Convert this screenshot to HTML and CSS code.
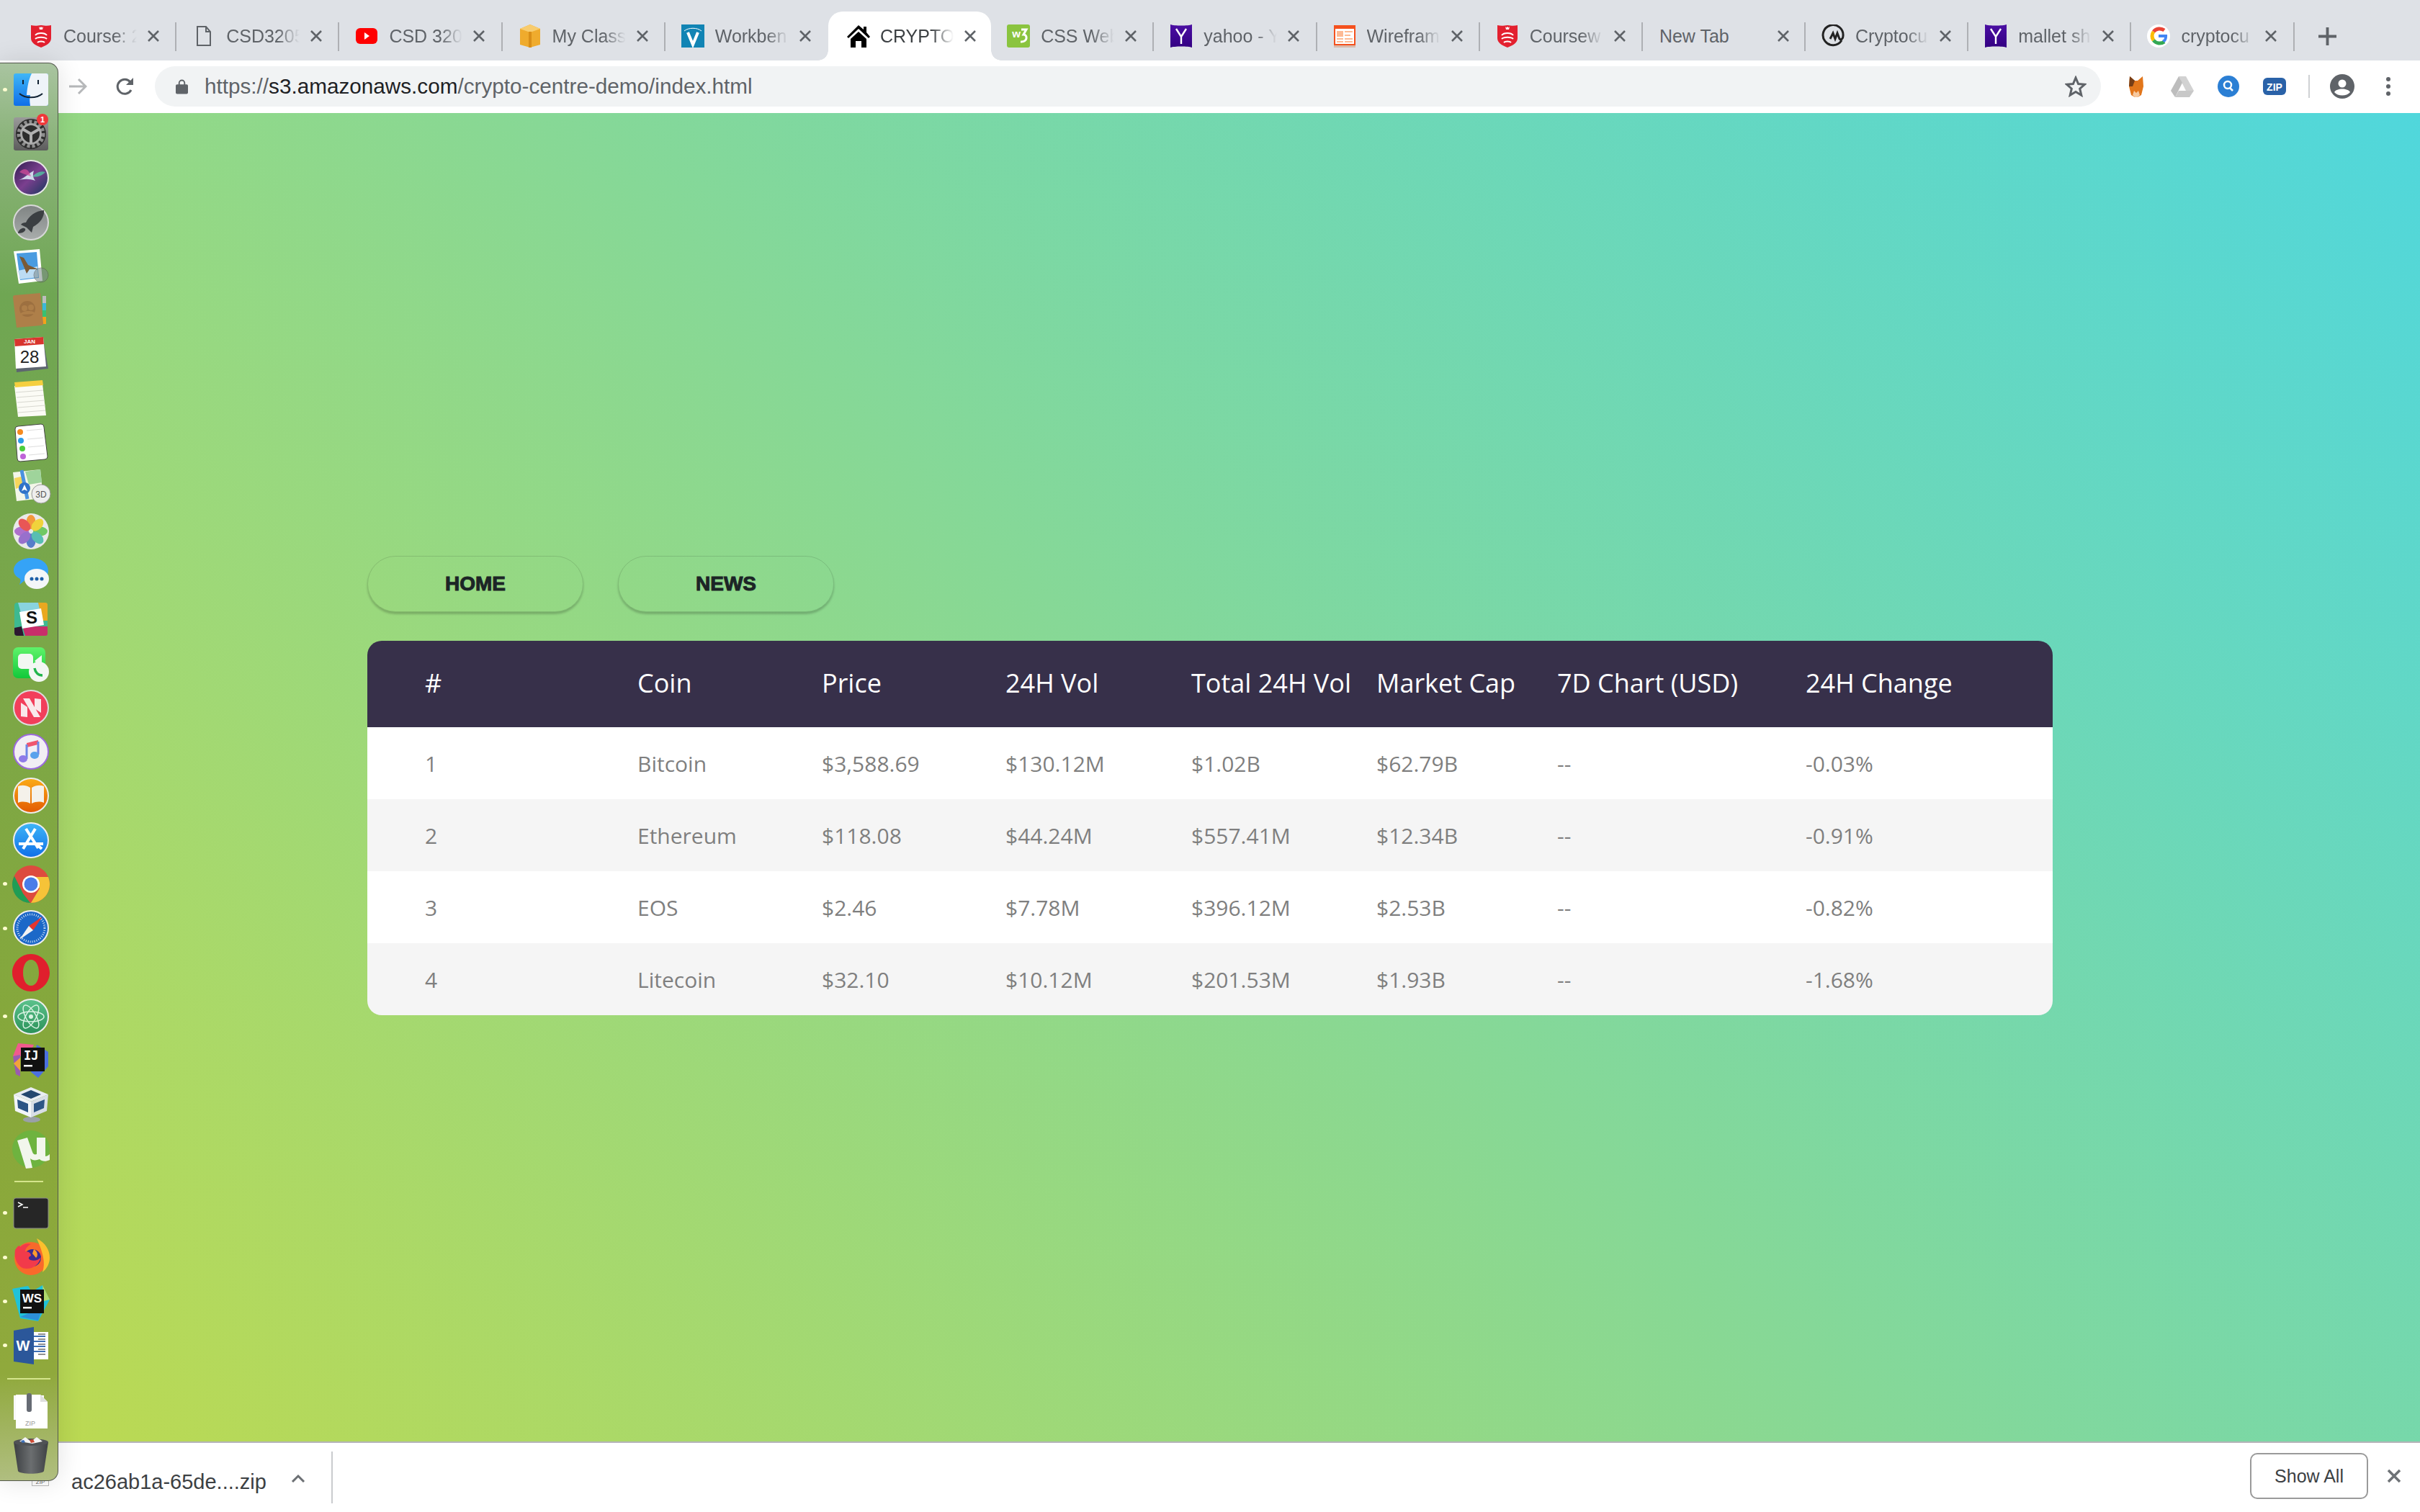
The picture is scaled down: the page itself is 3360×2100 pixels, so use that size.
FILE: index.html
```html
<!DOCTYPE html>
<html lang="en">
<head>
    <meta charset="UTF-8">
    <meta name="viewport" content="width=device-width, initial-scale=1.0">
    <title>CRYPTO CENTRE</title>
    <link rel="stylesheet" href="styles.css">
</head>
<body>

<svg class="svg-defs" aria-hidden="true">
    <defs>
        <linearGradient id="gBlue" x1="0" y1="0" x2="0" y2="1"><stop offset="0" stop-color="#3fb6f7"/><stop offset="1" stop-color="#0f6fe8"/></linearGradient>
        <linearGradient id="gGrey" x1="0" y1="0" x2="0" y2="1"><stop offset="0" stop-color="#9a9a9a"/><stop offset="1" stop-color="#5c5c5c"/></linearGradient>
        <linearGradient id="gRocket" x1="0" y1="0" x2="0" y2="1"><stop offset="0" stop-color="#7f8483"/><stop offset="1" stop-color="#a9adac"/></linearGradient>
        <linearGradient id="gSiri" x1="0" y1="0" x2="1" y2="1"><stop offset="0" stop-color="#2b1c4d"/><stop offset=".5" stop-color="#7b3f8f"/><stop offset="1" stop-color="#13375a"/></linearGradient>
        <linearGradient id="gOrange" x1="0" y1="0" x2="0" y2="1"><stop offset="0" stop-color="#fbab16"/><stop offset="1" stop-color="#e25a03"/></linearGradient>
        <linearGradient id="gGreen" x1="0" y1="0" x2="0" y2="1"><stop offset="0" stop-color="#5ff36a"/><stop offset="1" stop-color="#12c93a"/></linearGradient>
        <linearGradient id="gAtom" x1="0" y1="0" x2="0" y2="1"><stop offset="0" stop-color="#5cc28c"/><stop offset="1" stop-color="#2b9159"/></linearGradient>
        <linearGradient id="gYahoo" x1="0" y1="0" x2="0" y2="1"><stop offset="0" stop-color="#4b0fa3"/><stop offset="1" stop-color="#330082"/></linearGradient>
        <linearGradient id="gTrash" x1="0" y1="0" x2="1" y2="0"><stop offset="0" stop-color="#3c3f42"/><stop offset=".5" stop-color="#6b6e70"/><stop offset="1" stop-color="#3e4144"/></linearGradient>
        <symbol id="crest" viewBox="0 0 32 32">
            <path fill="#e3202f" d="M2 1c4 1 8 1 14 0 6 1 10 1 14 0v18c0 6-6 10-14 13C8 29 2 25 2 19z"/>
            <path fill="#fff" d="M13 3l1.500 1.500L16 3l1.500 1.500L19 3l-1 4h-4z"/>
            <path fill="none" stroke="#fff" stroke-width="2" d="M8 15c3-4 13-4 16 0M8 20c3-3 13-3 16 0M11 25c2-2 8-2 10 0"/>
        </symbol>
        <symbol id="yahoo" viewBox="0 0 32 32">
            <path fill="url(#gYahoo)" d="M1 0c5 2 25 2 30 0v32c-5-2-25-2-30 0z"/>
            <path fill="none" stroke="#fff" stroke-width="2.400" d="M9 6l7 11 7-11M16 17v10"/>
        </symbol>
        <symbol id="closeX" viewBox="0 0 18 18">
            <path stroke="#5f6368" stroke-width="2.600" d="M2 2l14 14M16 2L2 16"/>
        </symbol>
    </defs>
</svg>

<header class="tab-strip">
    <div class="tab">
        <svg class="favicon" viewBox="0 0 32 32"><use href="#crest"/></svg>
        <span class="tab-title">Course: 2</span><svg class="tab-close"><use href="#closeX"/></svg>
    </div>
    <div class="tab">
        <svg class="favicon" viewBox="0 0 32 32"><path fill="none" stroke="#5f6368" stroke-width="2" d="M7 3h12l6 7v19H7zM19 3v7h6"/></svg>
        <span class="tab-title">CSD3205</span><svg class="tab-close"><use href="#closeX"/></svg>
    </div>
    <div class="tab">
        <svg class="favicon" viewBox="0 0 32 32"><rect x="1" y="5" width="30" height="22" rx="6" fill="#f00"/><path fill="#fff" d="M13 11l7 5-7 5z"/></svg>
        <span class="tab-title">CSD 320</span><svg class="tab-close"><use href="#closeX"/></svg>
    </div>
    <div class="tab">
        <svg class="favicon" viewBox="0 0 32 32"><path fill="#efab2d" d="M2 6l14-6 14 6v22l-14 4-14-4z"/><path fill="#f8cc6e" d="M2 6l14-6 14 6-14 5z"/><path fill="#d98e17" d="M14 10h4v22h-4z"/></svg>
        <span class="tab-title">My Class</span><svg class="tab-close"><use href="#closeX"/></svg>
    </div>
    <div class="tab tab-before-active">
        <svg class="favicon" viewBox="0 0 32 32"><rect width="32" height="32" fill="#1184b4"/><path fill="none" stroke="#fff" stroke-width="4" d="M9 11l7 17 7-17"/><path fill="none" stroke="#fff" d="M4 9c6-5 18-5 24 0"/></svg>
        <span class="tab-title">Workben</span><svg class="tab-close"><use href="#closeX"/></svg>
    </div>
    <div class="tab tab-active">
        <svg class="favicon" viewBox="0 0 32 32"><path d="M16 1l7 6V3h4v8l5 6-2 2L16 6 2 19l-2-2zM5 20L16 10l11 10v12h-7V23h-8v9H5z"/></svg>
        <span class="tab-title">CRYPTO</span><svg class="tab-close"><use href="#closeX"/></svg>
    </div>
    <div class="tab">
        <svg class="favicon" viewBox="0 0 32 32"><rect width="32" height="32" rx="3" fill="#8ac43f"/><text x="13" y="18" class="fav-w3">w</text><path fill="none" stroke="#fff" stroke-width="3" d="M20 7h7l-4 7c6 0 6 11-4 10"/></svg>
        <span class="tab-title">CSS Web</span><svg class="tab-close"><use href="#closeX"/></svg>
    </div>
    <div class="tab">
        <svg class="favicon" viewBox="0 0 32 32"><use href="#yahoo"/></svg>
        <span class="tab-title">yahoo - Y</span><svg class="tab-close"><use href="#closeX"/></svg>
    </div>
    <div class="tab">
        <svg class="favicon" viewBox="0 0 32 32"><rect x="1" y="1" width="30" height="28" fill="#f4511e"/><rect x="3" y="6" width="26" height="21" fill="#fff"/><path fill="#fdba94" d="M5 9h9v8H5zM16 9h11v2H16zM16 14h8v2H16zM5 19h9v2H5zM16 19h11v2H16zM5 23h9v2H5zM16 23h11v2H16z"/><rect x="1" y="29" width="30" height="3" fill="#d9b9ab"/></svg>
        <span class="tab-title">Wirefram</span><svg class="tab-close"><use href="#closeX"/></svg>
    </div>
    <div class="tab">
        <svg class="favicon" viewBox="0 0 32 32"><use href="#crest"/></svg>
        <span class="tab-title">Coursew</span><svg class="tab-close"><use href="#closeX"/></svg>
    </div>
    <div class="tab">
        <span class="tab-title tab-title-wide">New Tab</span><svg class="tab-close"><use href="#closeX"/></svg>
    </div>
    <div class="tab">
        <svg class="favicon" viewBox="0 0 32 32"><path fill="none" stroke="#222" stroke-width="3" d="M28 22A14 14 0 1 1 30 16c0 4-3 6-5 4l-3-8-3 8-3-8-4 8"/></svg>
        <span class="tab-title">Cryptocu</span><svg class="tab-close"><use href="#closeX"/></svg>
    </div>
    <div class="tab">
        <svg class="favicon" viewBox="0 0 32 32"><use href="#yahoo"/></svg>
        <span class="tab-title">mallet sh</span><svg class="tab-close"><use href="#closeX"/></svg>
    </div>
    <div class="tab">
        <svg class="favicon" viewBox="0 0 32 32"><circle cx="16" cy="16" r="16" fill="#fff"/><path fill="none" stroke="#ea4335" stroke-width="5" d="M24 8a11 11 0 0 0-15 2"/><path fill="none" stroke="#fbbc05" stroke-width="5" d="M9 10a11 11 0 0 0 0 12"/><path fill="none" stroke="#34a853" stroke-width="5" d="M9 22a11 11 0 0 0 15 2"/><path fill="#4285f4" d="M16 14h12c.5 5-1 9-4 11l-3-3c2-1 3-2 3-4h-8z"/></svg>
        <span class="tab-title">cryptocu</span><svg class="tab-close"><use href="#closeX"/></svg>
    </div>
    <svg class="new-tab" viewBox="0 0 26 26"><path stroke="#5f6368" stroke-width="4" d="M13 0v26M0 13h26"/></svg>
</header>

<nav class="toolbar">
    <svg class="tool-forward" viewBox="0 0 26 26"><path fill="none" stroke="#b6b8ba" stroke-width="3" d="M1 13h22M14 3l10 10-10 10"/></svg>
    <svg class="tool-reload" viewBox="0 0 26 26"><path fill="none" stroke="#5f6368" stroke-width="3" d="M21 18a10 10 0 1 1-1-11"/><path fill="#5f6368" d="M24 1v10H14z"/></svg>
    <div class="omnibox">
        <svg class="lock" viewBox="0 0 18 22"><path fill="none" stroke="#5f6368" stroke-width="2" d="M5 9V6a4 4 0 0 1 8 0v3"/><rect y="8" width="18" height="14" rx="2" fill="#5f6368"/></svg>
        <span class="url">https://<span class="url-host">s3.amazonaws.com</span>/crypto-centre-demo/index.html</span>
        <svg class="star" viewBox="0 0 30 30"><path fill="none" stroke="#5f6368" stroke-width="3" d="M15 3l3.600 8.500 9 .7-6.900 6 2.100 9L15 22.500 7.200 27.200l2.100-9-6.900-6 9-.7z"/></svg>
    </div>
    <div class="extensions">
        <svg class="ext" viewBox="0 0 32 32"><path fill="#e2761b" d="M7 2l7 6h4l7-6 1 14-3 12-5 3h-4l-5-3-3-12z"/><path fill="#763d16" d="M7 2l7 6-3 8H6z"/><path fill="#f6c9a0" d="M13 22l3 3 3-3 2 6-3 3h-4l-3-3z"/></svg>
        <svg class="ext" viewBox="0 0 32 32"><path fill="#d2d2d2" d="M11 2h10l11 20H21z"/><path fill="#bdbdbd" d="M11 2l5 9-10 20-6-9z"/><path fill="#c8c8c8" d="M11 22h21l-6 9H6z"/></svg>
        <svg class="ext" viewBox="0 0 32 32"><circle cx="16" cy="16" r="15" fill="#2b7fd4"/><circle cx="15" cy="14" r="5" fill="none" stroke="#fff" stroke-width="2.500"/><path stroke="#fff" stroke-width="2.500" d="M18 18l4 4"/></svg>
        <svg class="ext" viewBox="0 0 32 32"><rect y="4" width="32" height="24" rx="6" fill="#2a62a8"/><text x="16" y="21.500" class="ext-zip">ZIP</text></svg>
        <span class="tool-sep"></span>
        <svg class="avatar" viewBox="0 0 34 34"><circle cx="17" cy="17" r="17" fill="#5f6368"/><circle cx="17" cy="13" r="5.500" fill="#fff"/><path fill="#fff" d="M6 25c3-6 19-6 22 0-5 6-17 6-22 0z"/></svg>
        <svg class="menu-dots" viewBox="0 0 6 26"><circle cx="3" cy="3" r="3" fill="#5f6368"/><circle cx="3" cy="13" r="3" fill="#5f6368"/><circle cx="3" cy="23" r="3" fill="#5f6368"/></svg>
    </div>
</nav>

<main class="page">
    <div class="nav-buttons">
        <a class="nav-btn">HOME</a>
        <a class="nav-btn">NEWS</a>
    </div>
    <div class="table-wrap">
        <table class="coins">
            <thead>
                <tr>
                    <th>#</th><th>Coin</th><th>Price</th><th>24H Vol</th><th>Total 24H Vol</th><th>Market Cap</th><th>7D Chart (USD)</th><th>24H Change</th>
                </tr>
            </thead>
            <tbody>
                <tr><td>1</td><td>Bitcoin</td><td>$3,588.69</td><td>$130.12M</td><td>$1.02B</td><td>$62.79B</td><td>--</td><td>-0.03%</td></tr>
                <tr><td>2</td><td>Ethereum</td><td>$118.08</td><td>$44.24M</td><td>$557.41M</td><td>$12.34B</td><td>--</td><td>-0.91%</td></tr>
                <tr><td>3</td><td>EOS</td><td>$2.46</td><td>$7.78M</td><td>$396.12M</td><td>$2.53B</td><td>--</td><td>-0.82%</td></tr>
                <tr><td>4</td><td>Litecoin</td><td>$32.10</td><td>$10.12M</td><td>$201.53M</td><td>$1.93B</td><td>--</td><td>-1.68%</td></tr>
            </tbody>
        </table>
    </div>
</main>

<footer class="download-bar">
    <svg class="file-icon" viewBox="0 0 24 40"><rect x=".5" y=".5" width="23" height="39" fill="#fff" stroke="#bbb"/><text x="12" y="37" class="file-zip">ZIP</text></svg>
    <span class="file-name">ac26ab1a-65de....zip</span>
    <svg class="file-caret" viewBox="0 0 20 12"><path fill="none" stroke="#6b6f73" stroke-width="3" d="M2 11l8-8 8 8"/></svg>
    <span class="download-sep"></span>
    <button class="show-all">Show All</button>
    <svg class="bar-close" viewBox="0 0 20 20"><path stroke="#6e7276" stroke-width="3.500" d="M2 2l16 16M18 2L2 18"/></svg>
</footer>

<aside class="dock">
    <div class="dock-item running"><svg viewBox="0 0 52 52"><rect x="2" y="3" width="48" height="45" rx="3" fill="url(#gBlue)"/><path fill="#eef3f8" d="M27 3h20a3 3 0 0 1 3 3v39a3 3 0 0 1-3 3H25c-1-6-1-11 0-15h-5c1-12 3-22 7-30z"/><path stroke="#123" stroke-width="2" d="M15 12v6M36 12v6"/><path fill="none" stroke="#123" stroke-width="2" d="M10 31c8 7 24 7 32 0"/></svg></div>
    <div class="dock-item"><svg viewBox="0 0 52 52"><rect x="2" y="3" width="48" height="46" rx="3" fill="url(#gGrey)"/><circle cx="26" cy="26" r="21" fill="#2d2d2d"/><circle cx="26" cy="26" r="17" fill="none" stroke="#8e8e8e" stroke-width="5" stroke-dasharray="4 3"/><circle cx="26" cy="26" r="13.500" fill="none" stroke="#a9a9a9" stroke-width="3"/><path stroke="#b0b0b0" stroke-width="4" d="M26 26v13M26 26L14 19M26 26l12-7"/><circle cx="42" cy="6" r="8" fill="#f0383a"/><text x="42" y="10" class="badge-text">1</text></svg></div>
    <div class="dock-item"><svg viewBox="0 0 52 52"><circle cx="26" cy="26" r="24" fill="url(#gSiri)" stroke="#e8e8e8" stroke-width="2"/><path fill="#d9e9f5" opacity=".9" d="M6 30c10-2 16-10 24-14-2 6-1 10 2 14-8-3-16-3-26 0z"/><path fill="#4ed6a6" opacity=".7" d="M28 24c6-6 12-8 18-6-4 4-10 8-18 6z"/><path fill="#d94f9b" opacity=".7" d="M10 18c6-6 12-6 16 6-6-2-12-4-16-6z"/></svg></div>
    <div class="dock-item"><svg viewBox="0 0 52 52"><circle cx="26" cy="26" r="24" fill="url(#gRocket)" stroke="#d8d8d8" stroke-width="2"/><path fill="#3b3f42" d="M44 9c1 10-6 18-15 23l-2 8-7-7-8-4c1-2 4-3 7-3 4-9 13-16 25-17z"/><path fill="#3b3f42" d="M14 34c3-1 5 1 4 3-2 3-6 4-10 4 0-3 3-6 6-7z"/></svg></div>
    <div class="dock-item"><svg viewBox="0 0 52 52"><path fill="#fff" d="M2 5l36-3 4 44-33 4z"/><path fill="#4a9be0" d="M6 8l28-2 3 36-26 3z"/><path fill="#bcdcf3" d="M8 32l27-6 1 15-25 3z"/><path fill="#7a5a36" d="M10 12l6 2 6 10 14 6-12 0-4 6-4-10z"/><circle cx="40" cy="38" r="10" fill="#7c8a8a" opacity=".55" stroke="#555"/></svg></div>
    <div class="dock-item"><svg viewBox="0 0 52 52"><rect x="42" y="6" width="5" height="10" fill="#bdbdbd"/><rect x="42" y="16" width="5" height="10" fill="#3db7d8"/><rect x="42" y="26" width="5" height="9" fill="#38c172"/><rect x="42" y="35" width="5" height="10" fill="#f2a21b"/><path fill="#ae7f49" d="M1 8a3 3 0 0 1 3-3l35-3 4 42a3 3 0 0 1-3 3L6 50z"/><circle cx="21" cy="24" r="11" fill="#9d7040"/><circle cx="17" cy="23" r="4" fill="#ae7f49"/><circle cx="26" cy="22" r="4" fill="#ae7f49"/><path fill="#ae7f49" d="M11 32c1-6 20-7 21-1z"/></svg></div>
    <div class="dock-item"><svg viewBox="0 0 52 52"><path fill="#5d6570" d="M5 9l38-3 7 40-44 5z"/><path fill="#fff" d="M3 5l40-3 4 41-42 3z"/><path fill="#d8352e" d="M3 5l40-3 .8 10-40 3z"/><text x="24" y="11" class="cal-month">JAN</text><text x="24" y="38" class="cal-day">28</text></svg></div>
    <div class="dock-item"><svg viewBox="0 0 52 52"><path fill="#fbfbf5" d="M3 8l39-3 5 44-39 2z"/><path fill="#f5cf3f" d="M3 3l39-3 1 7-39 3z"/><path stroke="#d8d8d0" d="M5 17l38-3M6 24l38-3M7 31l38-3M8 38l38-3M8 45l38-3"/></svg></div>
    <div class="dock-item"><svg viewBox="0 0 52 52"><path fill="#fff" stroke="#444" d="M4 7a4 4 0 0 1 4-4l32-3a4 4 0 0 1 4 4l5 41a4 4 0 0 1-4 4l-34 3a4 4 0 0 1-4-4z"/><circle cx="11" cy="11" r="4" fill="#f58a1e"/><circle cx="12" cy="23" r="4" fill="#2b9ce8"/><circle cx="14" cy="34" r="4" fill="#4ccd3d"/><circle cx="15" cy="45" r="4" fill="#bf63d8"/><path stroke="#ddd" d="M20 9l22-2M21 21l22-2M22 32l22-2M23 43l22-2"/></svg></div>
    <div class="dock-item"><svg viewBox="0 0 52 52"><path fill="#f3f6e9" d="M1 6l38-4 4 40-37 4z"/><path fill="#9fd49b" d="M18 5l21-3 2 18-18 3z"/><path fill="#f6d65b" d="M3 14l14-3-2 14-10 4z"/><path fill="none" stroke="#4a92e0" stroke-width="5" d="M13 3l8 40"/><circle cx="17" cy="28" r="8" fill="#2f72c8"/><path fill="#fff" d="M17 23l4 9-4-2-4 2z"/><circle cx="40" cy="36" r="13" fill="#eee" stroke="#999"/><text x="40" y="41" class="map-3d">3D</text></svg></div>
    <div class="dock-item"><svg viewBox="0 0 52 52"><circle cx="26" cy="26" r="25" fill="#e9e9e9"/><g opacity=".85"><ellipse cx="26" cy="13" rx="6.500" ry="10" fill="#f58c1e"/><ellipse cx="26" cy="39" rx="6.500" ry="10" fill="#3d6bc4"/><ellipse cx="13" cy="26" rx="10" ry="6.500" fill="#a45cc7"/><ellipse cx="39" cy="26" rx="10" ry="6.500" fill="#5cc34d"/><ellipse cx="17" cy="17" rx="6.500" ry="10" transform="rotate(-45 17 17)" fill="#e83d3d"/><ellipse cx="35" cy="17" rx="6.500" ry="10" transform="rotate(45 35 17)" fill="#f2d01e"/><ellipse cx="17" cy="35" rx="6.500" ry="10" transform="rotate(45 17 35)" fill="#8a5bc7"/><ellipse cx="35" cy="35" rx="6.500" ry="10" transform="rotate(-45 35 35)" fill="#3fb7a9"/></g></svg></div>
    <div class="dock-item"><svg viewBox="0 0 52 52"><path fill="#35a3f6" d="M26 2c14 0 24 7 24 18 0 4-2 8-5 11H20l-10 8c1-3 2-6 1-8C5 28 2 24 2 19 2 9 13 2 26 2z"/><ellipse cx="34" cy="31" rx="17" ry="14" fill="#f4f6f8"/><circle cx="27" cy="31" r="2.500" fill="#1d5fa8"/><circle cx="34" cy="31" r="2.500" fill="#1d5fa8"/><circle cx="41" cy="31" r="2.500" fill="#1d5fa8"/></svg></div>
    <div class="dock-item"><svg viewBox="0 0 52 52"><rect x="3" y="3" width="46" height="46" rx="4" fill="#3eb991"/><path fill="#e9a820" d="M36 3h10a3 3 0 0 1 3 3v22H40z"/><path fill="#89d3df" d="M8 3h28l3 14H12z"/><path fill="#e01563" opacity=".85" d="M14 36h35v10a3 3 0 0 1-3 3H18z"/><path fill="#2d1830" d="M3 38l10-2 3 13H7a4 4 0 0 1-4-4z"/><path fill="#fff" d="M10 16l30-5 4 23-30 5z"/><text x="27" y="32" class="slack-s">S</text></svg></div>
    <div class="dock-item"><svg viewBox="0 0 52 52"><rect x="1" y="3" width="45" height="43" rx="7" fill="url(#gGreen)"/><rect x="8" y="12" width="21" height="21" rx="5" fill="#f2f7f2"/><path fill="#f2f7f2" d="M31 22l10-8v18z"/><circle cx="37" cy="37" r="14" fill="#f3f7f3"/><path fill="none" stroke="#22b54c" stroke-width="3.500" d="M31 32c1 6 5 10 11 10"/></svg></div>
    <div class="dock-item"><svg viewBox="0 0 52 52"><circle cx="26" cy="26" r="24" fill="#f23f5b" stroke="#ddd" stroke-width="2"/><path fill="#f9e8ea" d="M12 19l9 6v14l-9-1zM40 33l-9-6V13l9 1zM15 13h9l15 26h-9z"/></svg></div>
    <div class="dock-item"><svg viewBox="0 0 52 52"><circle cx="26" cy="26" r="24" fill="#f2eef4" stroke="#9c6ade" stroke-width="2"/><path fill="#f0556e" d="M20 14l16-4v6l-16 4z"/><path fill="none" stroke="#6e86e6" stroke-width="3" d="M20 16v20M36 12v18"/><ellipse cx="15" cy="36" rx="6" ry="5" fill="#8f7ae8"/><ellipse cx="31" cy="31" rx="6" ry="5" fill="#5aa2ec"/></svg></div>
    <div class="dock-item"><svg viewBox="0 0 52 52"><circle cx="26" cy="26" r="24" fill="url(#gOrange)" stroke="#eee" stroke-width="2"/><path fill="#f4f1ea" d="M25 15c-6-4-12-4-17-2v23c5-2 11-2 17 1zM27 15c6-4 12-4 17-2v23c-5-2-11-2-17 1z"/></svg></div>
    <div class="dock-item"><svg viewBox="0 0 52 52"><circle cx="26" cy="26" r="24" fill="url(#gBlue)" stroke="#eee" stroke-width="2"/><path fill="none" stroke="#fff" stroke-width="4" d="M19 10l17 27M32 10L15 38M9 31h34M33 31l8 7"/></svg></div>
    <div class="dock-item running"><svg viewBox="0 0 52 52"><circle cx="26" cy="26" r="26" fill="#dd4b3e"/><path fill="#1f9d55" d="M3 15l12 24 10 13C11 52 0 40 0 26c0-4 1-8 3-11z"/><path fill="#f6c338" d="M26 16h24c1 3 2 6 2 10 0 14-11 26-26 26l12-20z"/><circle cx="26" cy="26" r="12" fill="#fff"/><circle cx="26" cy="26" r="9.500" fill="#4a7de8"/></svg></div>
    <div class="dock-item running"><svg viewBox="0 0 52 52"><circle cx="26" cy="26" r="24" fill="#1c68c8" stroke="#eee" stroke-width="2"/><circle cx="26" cy="26" r="19" fill="none" stroke="#cfe2f5" stroke-width="3" stroke-dasharray="1 2"/><path fill="#e5352f" d="M42 10L29 29l-6-6z"/><path fill="#f2f2f2" d="M10 42l13-19 6 6z"/></svg></div>
    <div class="dock-item"><svg viewBox="0 0 52 52"><path fill="#e01f2d" fill-rule="evenodd" d="M26 0c14 0 26 12 26 26S40 52 26 52 0 40 0 26 12 0 26 0zm0 8c-7 0-11 8-11 18s4 18 11 18 11-8 11-18S33 8 26 8z"/></svg></div>
    <div class="dock-item running"><svg viewBox="0 0 52 52"><circle cx="26" cy="26" r="24" fill="url(#gAtom)" stroke="#eee" stroke-width="2"/><g fill="none" stroke="#d8f2e2" stroke-width="1.500"><ellipse cx="26" cy="26" rx="18" ry="7"/><ellipse cx="26" cy="26" rx="18" ry="7" transform="rotate(60 26 26)"/><ellipse cx="26" cy="26" rx="18" ry="7" transform="rotate(-60 26 26)"/></g><circle cx="26" cy="26" r="3" fill="#d8f2e2"/></svg></div>
    <div class="dock-item"><svg viewBox="0 0 52 52"><path fill="#f05a8e" d="M8 2l22 2-8 16H1z"/><path fill="#4a6fe0" d="M34 4l16 10v20L36 50l-10-8z"/><path fill="#9a5bb0" d="M1 20l10-2v30l-6-3z"/><path fill="#f2a33a" d="M2 30l9-8v18z"/><rect x="12" y="8" width="33" height="33" fill="#111"/><text x="16" y="25" class="jb-text">IJ</text><rect x="16" y="32" width="12" height="2.500" fill="#fff"/></svg></div>
    <div class="dock-item"><svg viewBox="0 0 52 52"><ellipse cx="27" cy="47" rx="12" ry="4" fill="#9aa0a8"/><path fill="#e9edf3" d="M26 2l24 10-24 10L2 12z"/><path fill="#24476f" d="M26 6l14 6-14 6-14-6z"/><path fill="#f2f5f8" d="M2 12l24 10v22L4 35z"/><path fill="#d8dee6" d="M50 12L26 22v22l22-9z"/><path fill="#2d5585" d="M7 19l15 6v12L8 31zM45 19l-15 6v12l14-6z"/></svg></div>
    <div class="dock-item"><svg viewBox="0 0 52 52"><circle cx="26" cy="26" r="26" fill="#6eb33f"/><path fill="#f2f6ec" d="M7 14l14-4 7 20c1 3 3 4 6 3V10h12v26c2 0 4-1 6-3v8c-6 3-11 2-14-1-5 2-10 2-13-1l3 13-9 1z"/></svg></div>
    <div class="dock-sep dock-sep-short"></div>
    <div class="dock-item running"><svg viewBox="0 0 52 52"><rect x="2" y="5" width="48" height="42" rx="3" fill="#262626" stroke="#8a8a8a"/><path fill="none" stroke="#fff" stroke-width="1.500" d="M8 11l6 3-6 3M15 18h7"/></svg></div>
    <div class="dock-item running"><svg viewBox="0 0 52 52"><circle cx="26" cy="28" r="23" fill="#f9692b"/><circle cx="28" cy="27" r="12" fill="#3a2a90"/><path fill="#fcc02d" d="M34 0c12 6 18 16 18 27 0 8-4 15-10 20 4-12 2-24-8-47z"/><path fill="#f23a4a" d="M4 16c4-6 6-7 7-4 4-4 10-6 15-4-4 2-8 6-8 10 4 0 8 2 8 6-4 2-4 4-1 6 6 2 12 0 15-4-3 10-10 16-20 16C8 42 2 28 4 16z"/><path fill="#fb9a2d" d="M30 15c4 2 7 8 3 12l-5-6z"/></svg></div>
    <div class="dock-item running"><svg viewBox="0 0 52 52"><path fill="#20c2d8" d="M0 8l22-4 5 8 15-9 10 20-16 30-25-4z"/><path fill="#2d8fd9" d="M11 47l25 5 6-18z"/><path fill="#f0e23c" opacity=".7" d="M42 3l10 20-8 2z"/><rect x="11" y="9" width="33" height="33" fill="#111"/><text x="27.500" y="27" class="jb-text jb-ws">WS</text><rect x="15" y="33" width="12" height="2.500" fill="#fff"/></svg></div>
    <div class="dock-item running"><svg viewBox="0 0 52 52"><rect x="26" y="7" width="24" height="38" fill="#fff"/><path stroke="#3d6fb5" stroke-width="2" d="M30 13h16M30 20h16M30 27h16M30 34h16"/><path stroke="#222" stroke-width="1" d="M36 10h10M36 17h10M36 24h10M36 31h10M36 38h10"/><path fill="#2b579a" d="M2 5l28-5v52L2 48z"/><text x="15" y="33" class="word-w">W</text></svg></div>
    <div class="dock-sep dock-sep-long"></div>
    <div class="dock-item"><svg viewBox="0 0 52 52"><path fill="#f8f8f8" d="M2 4h42v34H2z"/><path fill="#fff" d="M5 3h34l10 10v37H5z"/><path fill="#dfdfdf" d="M39 3l10 10H39z"/><rect x="20" y="1" width="7" height="26" rx="3" fill="#666b74"/><text x="25" y="46" class="zip-label">ZIP</text></svg></div>
    <div class="dock-item"><svg viewBox="0 0 52 52"><path fill="url(#gTrash)" d="M2 7h48l-6 40c-2 5-34 5-36 0z"/><ellipse cx="26" cy="7" rx="24" ry="5" fill="#4f5255"/><path fill="#f4f4f4" d="M10 6l8-6 8 6 8-6 8 6-14 3z"/><path fill="#cc4a34" d="M24 4l5-1 2 4-5 1z"/><path fill="#3c70b8" d="M12 5l4-1 2 3-4 1z"/></svg></div>
</aside>

</body>
</html>
```

FILE: styles.css
```css
* {
    box-sizing: border-box;
}
html, body {
    margin: 0;
    height: 100%;
}
body {
    display: flex;
    flex-direction: column;
    height: 100vh;
    overflow: hidden;
    position: relative;
    font-family: "Liberation Sans", Arial, sans-serif;
    background-color: #fff;
}
.svg-defs {
    display: block;
    width: 0;
    height: 0;
}

/* tabs */
.tab-strip {
    display: flex;
    align-items: stretch;
    height: 84px;
    padding: 16px 0 0 19px;
    background-color: #dee1e6;
}
.tab {
    display: flex;
    align-items: center;
    flex: 0 0 226.2px;
    padding: 0 22px;
    position: relative;
}
.tab::after {
    content: "";
    position: absolute;
    right: 0;
    top: 15px;
    height: 40px;
    width: 2px;
    background-color: #aeb0b4;
}
.tab-before-active::after {
    display: none;
}
.tab-active {
    background-color: #fff;
    border-radius: 20px 20px 0 0;
    padding-left: 26px;
    padding-right: 18px;
}
.tab-active::before,
.tab-active::after {
    content: "";
    position: absolute;
    top: auto;
    bottom: 0;
    width: 14px;
    height: 14px;
}
.tab-active::before {
    left: -14px;
    background: radial-gradient(circle at 0 0, transparent 13.500px, #fff 14px);
}
.tab-active::after {
    right: -14px;
    background: radial-gradient(circle at 100% 0, transparent 13.500px, #fff 14px);
}
.favicon {
    flex: 0 0 32px;
    width: 32px;
    height: 32px;
    margin-right: 15px;
}
.tab-title {
    flex: 0 0 102px;
    width: 102px;
    margin-right: 13px;
    font-size: 25px;
    line-height: 32px;
    color: #5f6368;
    white-space: nowrap;
    overflow: hidden;
    -webkit-mask-image: linear-gradient(to right, #000 70%, transparent);
    mask-image: linear-gradient(to right, #000 70%, transparent);
}
.tab-title-wide {
    flex-basis: 149px;
    width: 149px;
    margin-left: 1px;
    -webkit-mask-image: none;
    mask-image: none;
}
.tab-active .tab-title {
    margin-left: -1px;
    color: #3c4043;
}
.tab-close {
    flex: 0 0 18px;
    width: 18px;
    height: 18px;
    margin-left: 1px;
}
.new-tab {
    align-self: center;
    width: 25px;
    height: 25px;
    margin-left: 33px;
}

/* toolbar */
.toolbar {
    display: flex;
    align-items: center;
    height: 73px;
    padding-bottom: 1px;
    background-color: #fff;
}
.tool-forward {
    width: 26px;
    height: 26px;
    margin-left: 95px;
}
.tool-reload {
    width: 26px;
    height: 26px;
    margin-left: 40px;
}
.omnibox {
    display: flex;
    align-items: center;
    width: 2702px;
    height: 56px;
    margin-left: 28px;
    padding: 0 20px 0 29px;
    border-radius: 28px;
    background-color: #f1f3f4;
}
.lock {
    width: 17px;
    height: 22px;
    margin-right: 23px;
}
.url {
    flex: 1;
    font-size: 29.700px;
    color: #5f6368;
}
.url-host {
    color: #202124;
}
.star {
    width: 30px;
    height: 30px;
}
.extensions {
    display: flex;
    align-items: center;
    margin-left: 33px;
    gap: 32px;
}
.ext {
    width: 32px;
    height: 32px;
}
.ext-zip {
    font: bold 14px "Liberation Sans", sans-serif;
    fill: #fff;
    text-anchor: middle;
}
.tool-sep {
    width: 2px;
    height: 32px;
    margin-left: -1px;
    background-color: #cfd1d4;
}
.avatar {
    width: 34px;
    height: 34px;
    margin-left: -4px;
}
.menu-dots {
    width: 6px;
    height: 26px;
    margin-left: 12px;
}

/* page */
.page {
    flex: 1;
    padding: 615px 0 0 510px;
    background: linear-gradient(45deg, #bdd950, #50d7dc);
}
.nav-buttons {
    display: flex;
    gap: 48px;
    margin-bottom: 40px;
}
.nav-btn {
    display: flex;
    align-items: center;
    justify-content: center;
    width: 300px;
    height: 78px;
    border-radius: 39px;
    border: 1px solid rgba(0, 0, 0, 0.12);
    box-shadow: 0 3px 3px rgba(0, 0, 0, 0.2);
    font-size: 28px;
    font-weight: bold;
    color: #1c2526;
    -webkit-text-stroke: 1px #1c2526;
}
.table-wrap {
    width: 2340px;
    border-radius: 20px;
    overflow: hidden;
}
.coins {
    width: 100%;
    table-layout: fixed;
    border-collapse: collapse;
    font-family: "Open Sans", sans-serif;
}
.coins th {
    height: 120px;
    padding: 0 0 3px;
    font-size: 36px;
    font-weight: 400;
    text-align: left;
    color: #fff;
    background-color: #37304a;
}
.coins td {
    height: 100px;
    padding: 0;
    font-size: 30px;
    color: #7f7f7f;
    background-color: #fff;
}
.coins tr:nth-child(even) td {
    background-color: #f5f5f5;
}
.coins th:nth-child(1), .coins td:nth-child(1) {
    width: 375px;
    padding-left: 80px;
}
.coins th:nth-child(2) { width: 256px; }
.coins th:nth-child(3) { width: 255px; }
.coins th:nth-child(4) { width: 258px; }
.coins th:nth-child(5) { width: 257px; }
.coins th:nth-child(6) { width: 251px; }
.coins th:nth-child(7) { width: 345px; }
.coins th:nth-child(8) { width: 343px; }

/* download bar */
.download-bar {
    display: flex;
    align-items: center;
    height: 98px;
    padding-left: 44px;
    border-top: 2px solid #b4b4b8;
    background-color: #fff;
}
.file-icon {
    width: 24px;
    height: 40px;
    margin: 0 31px 16px 0;
}
.file-zip {
    font: 8px "Liberation Sans", sans-serif;
    fill: #666;
    text-anchor: middle;
}
.file-name {
    margin-top: 12px;
    font-size: 29px;
    color: #3c4043;
}
.file-caret {
    width: 20px;
    height: 12px;
    margin: 2px 0 0 34px;
}
.download-sep {
    width: 2px;
    height: 72px;
    margin-left: 36px;
    margin-right: auto;
    background-color: #c9cbce;
}
.show-all {
    width: 164px;
    height: 64px;
    margin-bottom: 4px;
    padding: 0;
    border: 2px solid #9a9a9a;
    border-radius: 10px;
    font-family: "Liberation Sans", Arial, sans-serif;
    font-size: 25px;
    color: #3c4043;
    background-color: #fff;
}
.bar-close {
    width: 20px;
    height: 20px;
    margin: 0 26px 4px 26px;
}

/* mac dock, sits over the browser window */
.dock {
    position: absolute;
    left: 0;
    top: 87px;
    width: 81px;
    height: 1970px;
    padding-top: 6px;
    border: 1px solid #55594f;
    border-left: none;
    border-radius: 0 14px 14px 0;
    background: linear-gradient(to bottom, #a9c4a0 0, #8cb47c 100px, #6fa653 320px, #7ba748 820px, #87a83a 1400px, #90a93c 1820px, #b0be80 100%);
    box-shadow: 0 0 36px rgba(0, 0, 0, 0.12);
}
.dock-item {
    display: flex;
    align-items: center;
    justify-content: center;
    height: 61.300px;
    position: relative;
}
.dock-item svg {
    width: 52px;
    height: 52px;
    margin-left: 5px;
    overflow: visible;
}
.running::before {
    content: "";
    position: absolute;
    left: 4px;
    top: 28px;
    width: 6px;
    height: 5px;
    border-radius: 50%;
    background-color: #fdfdd0;
}
.dock-sep {
    background-color: #d5e58c;
    height: 2px;
}
.dock-sep-short {
    width: 40px;
    margin: 14px 0 12px 20px;
}
.dock-sep-long {
    width: 60px;
    margin: 14px 0 14px 10px;
}
.badge-text {
    font: bold 11px "Liberation Sans", sans-serif;
    fill: #fff;
    text-anchor: middle;
}
.cal-month {
    font: bold 8px "Liberation Sans", sans-serif;
    fill: #fff;
    text-anchor: middle;
}
.cal-day {
    font: 24px "Liberation Sans", sans-serif;
    fill: #222;
    text-anchor: middle;
}
.map-3d {
    font: 12px "Liberation Sans", sans-serif;
    fill: #555;
    text-anchor: middle;
}
.slack-s {
    font: bold 24px "Liberation Sans", sans-serif;
    fill: #111;
    text-anchor: middle;
}
.jb-text {
    font: bold 17px "DejaVu Sans Mono", monospace;
    fill: #fff;
}
.jb-ws {
    font: bold 17px "Liberation Sans", sans-serif;
    text-anchor: middle;
}
.word-w {
    font: bold 20px "Liberation Sans", sans-serif;
    fill: #fff;
    text-anchor: middle;
}
.zip-label {
    font: 9px "Liberation Sans", sans-serif;
    fill: #999;
    text-anchor: middle;
}
.fav-w3 {
    font: bold 15px "Liberation Sans", sans-serif;
    fill: #fff;
    text-anchor: middle;
}
```
